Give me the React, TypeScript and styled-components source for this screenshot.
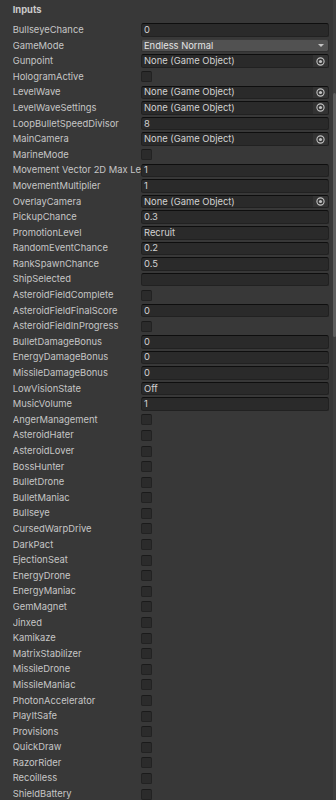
import React from "react";
import styled, { createGlobalStyle } from "styled-components";

const Global = createGlobalStyle`
  html, body { margin: 0; padding: 0; background: #383838; overflow: hidden; height: 800px; }
  #root { height: 800px; }
  * { box-sizing: border-box; }
`;

const Panel = styled.div`
  display: flex;
  width: 336px;
  height: 800px;
  background: #383838;
  font-family: Inter, "Noto Sans", sans-serif;
  font-size: 9.4px;
  color: #c4c4c4;
  overflow: hidden;
`;

const Content = styled.div`
  flex: 1;
  display: flex;
  flex-direction: column;
  padding-right: 3.5px;
  min-width: 0;
`;

const Header = styled.div`
  flex-shrink: 0;
  height: 22.2px;
  padding: 2px 0 0 12.7px;
  line-height: 15px;
  font-weight: 700;
  color: #cacaca;
`;

const Row = styled.div`
  display: grid;
  grid-template-columns: 128.3px 1fr;
  align-items: center;
  height: 15.6px;
  padding-left: 12.7px;
  flex-shrink: 0;
`;

const Label = styled.div`
  white-space: nowrap;
  overflow: hidden;
  color: #c6c6c6;
  line-height: 14px;
`;

const Field = styled.div<{ $dropdown?: boolean }>`
  position: relative;
  display: flex;
  align-items: center;
  height: 13.6px;
  border-radius: 2.5px;
  background: ${(p) => (p.$dropdown ? "#515151" : "#2a2a2a")};
  border: 1px solid ${(p) => (p.$dropdown ? "#303030" : "#212121")};
  border-top-color: ${(p) => (p.$dropdown ? "#3a3a3a" : "#0e0e0e")};
  color: ${(p) => (p.$dropdown ? "#e4e4e4" : "#d2d2d2")};
  padding-left: 2px;
  overflow: hidden;
`;

const Value = styled.span`
  flex: 1;
  white-space: nowrap;
  line-height: 12px;
`;

const PickButton = styled.div`
  width: 15px;
  height: 100%;
  display: flex;
  align-items: center;
  justify-content: center;
  background: #333333;
`;

const Arrow = styled.div`
  width: 0;
  height: 0;
  margin-right: 4px;
  border-left: 3px solid transparent;
  border-right: 3px solid transparent;
  border-top: 3px solid #c4c4c4;
`;

const Check = styled.div`
  width: 10.7px;
  height: 11px;
  border-radius: 2px;
  background: #2b2b2b;
  border: 1px solid #222222;
  border-top-color: #1a1a1a;
`;

const Scrollbar = styled.div`
  width: 3.5px;
  height: 800px;
  background: #3f3f3f;
  display: flex;
  flex-direction: column;
`;

const Thumb = styled.div`
  margin-top: 93px;
  height: 244px;
  background: #5e5e5e;
  border-radius: 2px;
`;

type RowDef =
  | { l: string; t: "text"; v: string }
  | { l: string; t: "obj" }
  | { l: string; t: "enum"; v: string }
  | { l: string; t: "bool" };

const rows: RowDef[] = [
  { l: "BullseyeChance", t: "text", v: "0" },
  { l: "GameMode", t: "enum", v: "Endless Normal" },
  { l: "Gunpoint", t: "obj" },
  { l: "HologramActive", t: "bool" },
  { l: "LevelWave", t: "obj" },
  { l: "LevelWaveSettings", t: "obj" },
  { l: "LoopBulletSpeedDivisor", t: "text", v: "8" },
  { l: "MainCamera", t: "obj" },
  { l: "MarineMode", t: "bool" },
  { l: "Movement Vector 2D Max Le", t: "text", v: "1" },
  { l: "MovementMultiplier", t: "text", v: "1" },
  { l: "OverlayCamera", t: "obj" },
  { l: "PickupChance", t: "text", v: "0.3" },
  { l: "PromotionLevel", t: "text", v: "Recruit" },
  { l: "RandomEventChance", t: "text", v: "0.2" },
  { l: "RankSpawnChance", t: "text", v: "0.5" },
  { l: "ShipSelected", t: "text", v: "" },
  { l: "AsteroidFieldComplete", t: "bool" },
  { l: "AsteroidFieldFinalScore", t: "text", v: "0" },
  { l: "AsteroidFieldInProgress", t: "bool" },
  { l: "BulletDamageBonus", t: "text", v: "0" },
  { l: "EnergyDamageBonus", t: "text", v: "0" },
  { l: "MissileDamageBonus", t: "text", v: "0" },
  { l: "LowVisionState", t: "text", v: "Off" },
  { l: "MusicVolume", t: "text", v: "1" },
  ...[
    "AngerManagement",
    "AsteroidHater",
    "AsteroidLover",
    "BossHunter",
    "BulletDrone",
    "BulletManiac",
    "Bullseye",
    "CursedWarpDrive",
    "DarkPact",
    "EjectionSeat",
    "EnergyDrone",
    "EnergyManiac",
    "GemMagnet",
    "Jinxed",
    "Kamikaze",
    "MatrixStabilizer",
    "MissileDrone",
    "MissileManiac",
    "PhotonAccelerator",
    "PlayItSafe",
    "Provisions",
    "QuickDraw",
    "RazorRider",
    "Recoilless",
    "ShieldBattery",
  ].map((l) => ({ l, t: "bool" as const })),
];

const TargetIcon = () => (
  <svg width="9" height="9" viewBox="0 0 9 9">
    <circle cx="4.5" cy="4.5" r="3.6" fill="none" stroke="#c2c2c2" strokeWidth="1.1" />
    <circle cx="4.5" cy="4.5" r="1.6" fill="#c2c2c2" />
  </svg>
);

const Control = ({ r }: { r: RowDef }) => {
  switch (r.t) {
    case "bool":
      return <Check />;
    case "text":
      return (
        <Field>
          <Value>{r.v}</Value>
        </Field>
      );
    case "enum":
      return (
        <Field $dropdown>
          <Value>{r.v}</Value>
          <Arrow />
        </Field>
      );
    case "obj":
      return (
        <Field>
          <Value>None (Game Object)</Value>
          <PickButton>
            <TargetIcon />
          </PickButton>
        </Field>
      );
  }
};

export default function App() {
  return (
    <>
      <Global />
      <Panel>
        <Content>
          <Header>Inputs</Header>
          {rows.map((r) => (
            <Row key={r.l}>
              <Label>{r.l}</Label>
              <Control r={r} />
            </Row>
          ))}
        </Content>
        <Scrollbar>
          <Thumb />
        </Scrollbar>
      </Panel>
    </>
  );
}
